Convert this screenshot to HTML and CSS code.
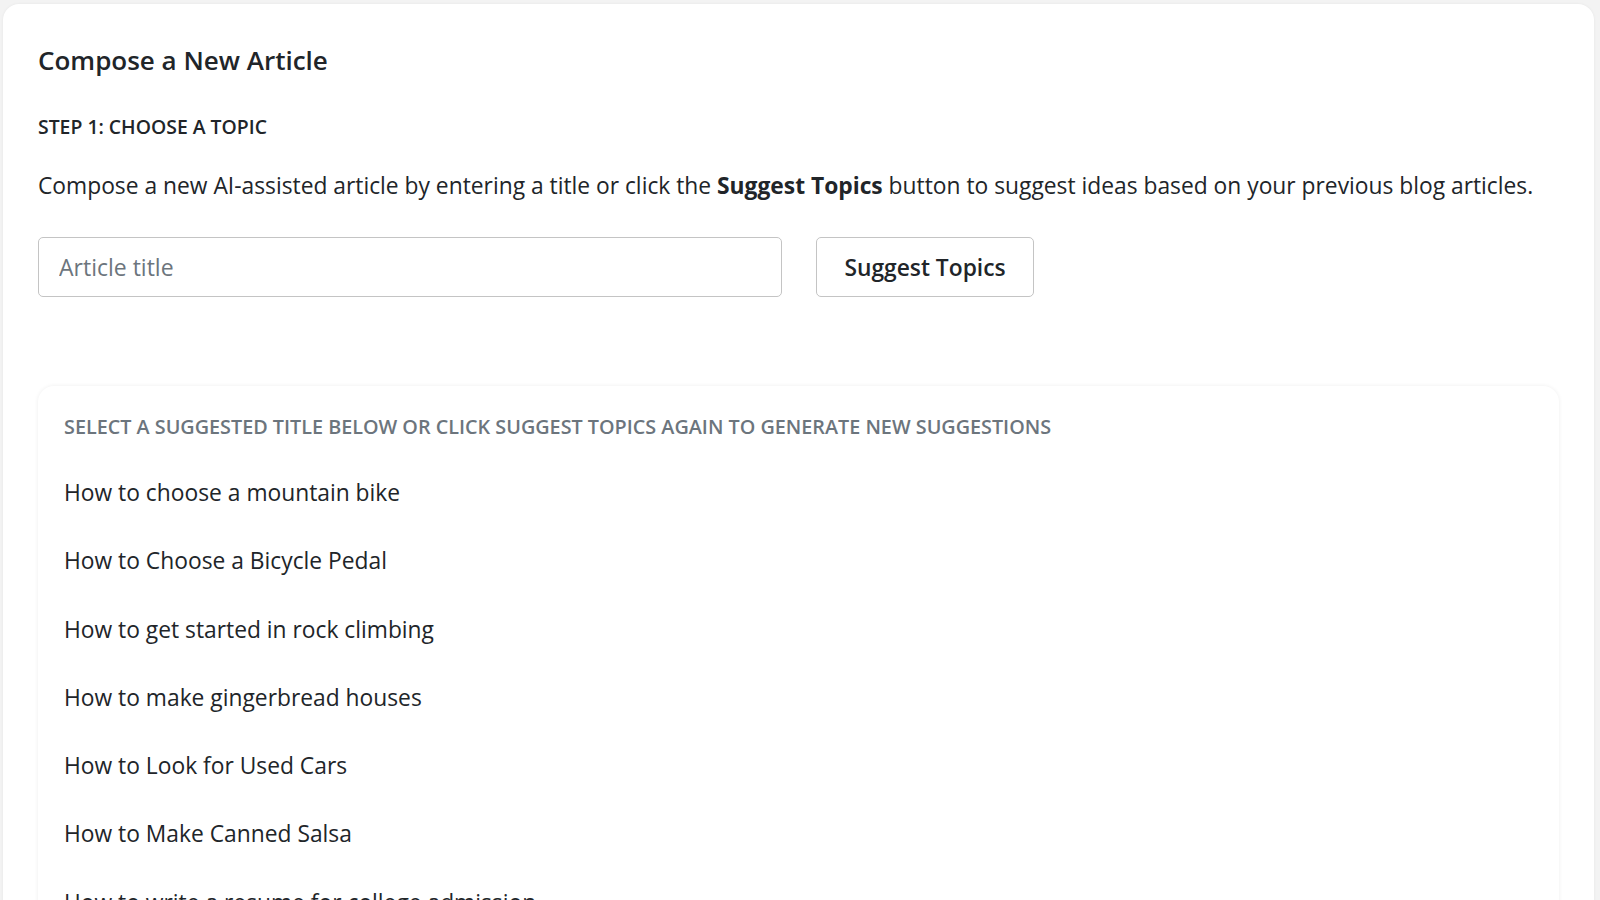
FILE: index.html
```html
<!DOCTYPE html>
<html lang="en">
<head>
    <meta charset="UTF-8">
    <meta name="viewport" content="width=device-width, initial-scale=1.0">
    <title>Compose a New Article</title>
    <link rel="stylesheet" href="styles.css">
</head>
<body>
    <div class="compose">
        <h1 class="compose-title">Compose a New Article</h1>
        <h2 class="step-title">Step 1: Choose a topic</h2>
        <p class="intro">Compose a new AI-assisted article by entering a title or click the <strong>Suggest Topics</strong> button to suggest ideas based on your previous blog articles.</p>
        <div class="topic-row">
          <input class="topic-input" type="text" placeholder="Article title">
          <button class="suggest-btn">Suggest Topics</button>
        </div>
        <div class="suggestions">
          <h3 class="suggestions-title">Select a suggested title below or click Suggest Topics again to generate new suggestions</h3>
          <ul class="suggestions-list">
            <li>How to choose a mountain bike</li>
            <li>How to Choose a Bicycle Pedal</li>
            <li>How to get started in rock climbing</li>
            <li>How to make gingerbread houses</li>
            <li>How to Look for Used Cars</li>
            <li>How to Make Canned Salsa</li>
            <li>How to write a resume for college admission</li>
          </ul>
        </div>
    </div>
</body>
</html>
```

FILE: styles.css
```css
* {
  box-sizing: border-box;
}

body {
  margin: 0;
  background-color: #f3f3f3;
  font-family: "Open Sans", "Noto Sans", sans-serif;
  color: #212529;
}

.compose {
  margin: 4px 6px 0 3px;
  padding: 35px 35px 40px;
  background-color: #fff;
  border-radius: 16px;
  box-shadow: 0 0 3px rgba(0, 0, 0, 0.06);
  min-height: 1000px;
}

.compose-title {
  margin: 4px 0 0;
  font-size: 26px;
  font-weight: 600;
  line-height: 34px;
}

.step-title {
  margin: 37px 0 0;
  font-size: 19.4px;
  font-weight: 600;
  text-transform: uppercase;
  line-height: 26px;
}

.intro {
  margin: 31px 0 0;
  font-size: 22.8px;
  line-height: 30px;
  white-space: nowrap;
}

.intro strong {
  font-weight: 700;
}

.topic-row {
  display: flex;
  gap: 34px;
  margin-top: 36px;
}

.topic-input {
  width: 744px;
  height: 60px;
  padding: 0 20px;
  border: 1px solid #c4c4c4;
  border-radius: 5px;
  font-family: inherit;
  font-size: 23px;
  color: #212529;
}

.topic-input::placeholder {
  color: #6c757d;
}

.suggest-btn {
  width: 218px;
  height: 60px;
  border: 1px solid #c4c4c4;
  border-radius: 5px;
  background-color: #fff;
  font-family: inherit;
  font-size: 22.8px;
  font-weight: 600;
  color: #212529;
}

.suggestions {
  margin-top: 89px;
  padding: 27px 26px 0;
  border-radius: 16px;
  box-shadow: 0 0 4px rgba(0, 0, 0, 0.07);
}

.suggestions-title {
  margin: 0;
  font-size: 19.8px;
  font-weight: 600;
  text-transform: uppercase;
  color: #6c757d;
  line-height: 28px;
}

.suggestions-list {
  list-style: none;
  margin: 18px 0 0;
  padding: 0;
}

.suggestions-list li {
  font-size: 22.8px;
  line-height: 28.3px;
  padding: 20px 0;
}
```
